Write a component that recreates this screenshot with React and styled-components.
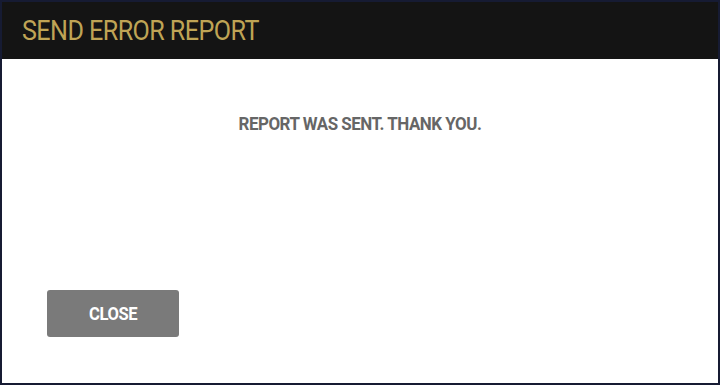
import React from "react";
import styled, { createGlobalStyle } from "styled-components";

const GlobalStyle = createGlobalStyle`
    html, body {
        margin: 0;
        padding: 0;
        background: #ffffff;
    }
    * {
        box-sizing: border-box;
    }
`;

const App = () => {
    const handleClose = () => {};

    return (
        <>
            <GlobalStyle />
            <Dialog>
                <Header>
                    <Title>SEND ERROR REPORT</Title>
                </Header>
                <Body>
                    <Message>REPORT WAS SENT. THANK YOU.</Message>
                    <Footer>
                        <Button onClick={handleClose}>
                            <Label>CLOSE</Label>
                        </Button>
                    </Footer>
                </Body>
            </Dialog>
        </>
    );
};

const Dialog = styled.div`
    width: 720px;
    height: 385px;
    display: flex;
    flex-direction: column;
    border: 2px solid #161b33;
    background: #ffffff;
    font-family: Roboto, "Liberation Sans", sans-serif;
`;
const Header = styled.div`
    height: 57px;
    display: flex;
    align-items: center;
    padding-left: 20px;
    background: #141414;
`;
// the original face is a condensed one, so squeeze Roboto a little
const Title = styled.h1`
    margin: 0;
    font-size: 27px;
    font-weight: 400;
    color: #bfa455;
    letter-spacing: -0.6px;
    transform: scaleX(0.93);
    transform-origin: left center;
`;
const Body = styled.div`
    flex: 1;
    display: flex;
    flex-direction: column;
    padding: 54px 45px 46px;
`;
const Message = styled.p`
    margin: 0;
    text-align: center;
    font-size: 18px;
    font-weight: 700;
    color: #666666;
    letter-spacing: -0.5px;
    transform: scaleX(0.94);
`;
const Footer = styled.div`
    margin-top: auto;
    display: flex;
`;
const Button = styled.button`
    width: 132px;
    height: 47px;
    padding: 0;
    border: none;
    border-radius: 3px;
    background: #7a7a7a;
    color: #ffffff;
    font-family: Roboto, "Liberation Sans", sans-serif;
    font-size: 18px;
    font-weight: 700;
    letter-spacing: -0.5px;
    cursor: pointer;
`;
const Label = styled.span`
    display: inline-block;
    transform: scaleX(0.92);
`;

export default App;
